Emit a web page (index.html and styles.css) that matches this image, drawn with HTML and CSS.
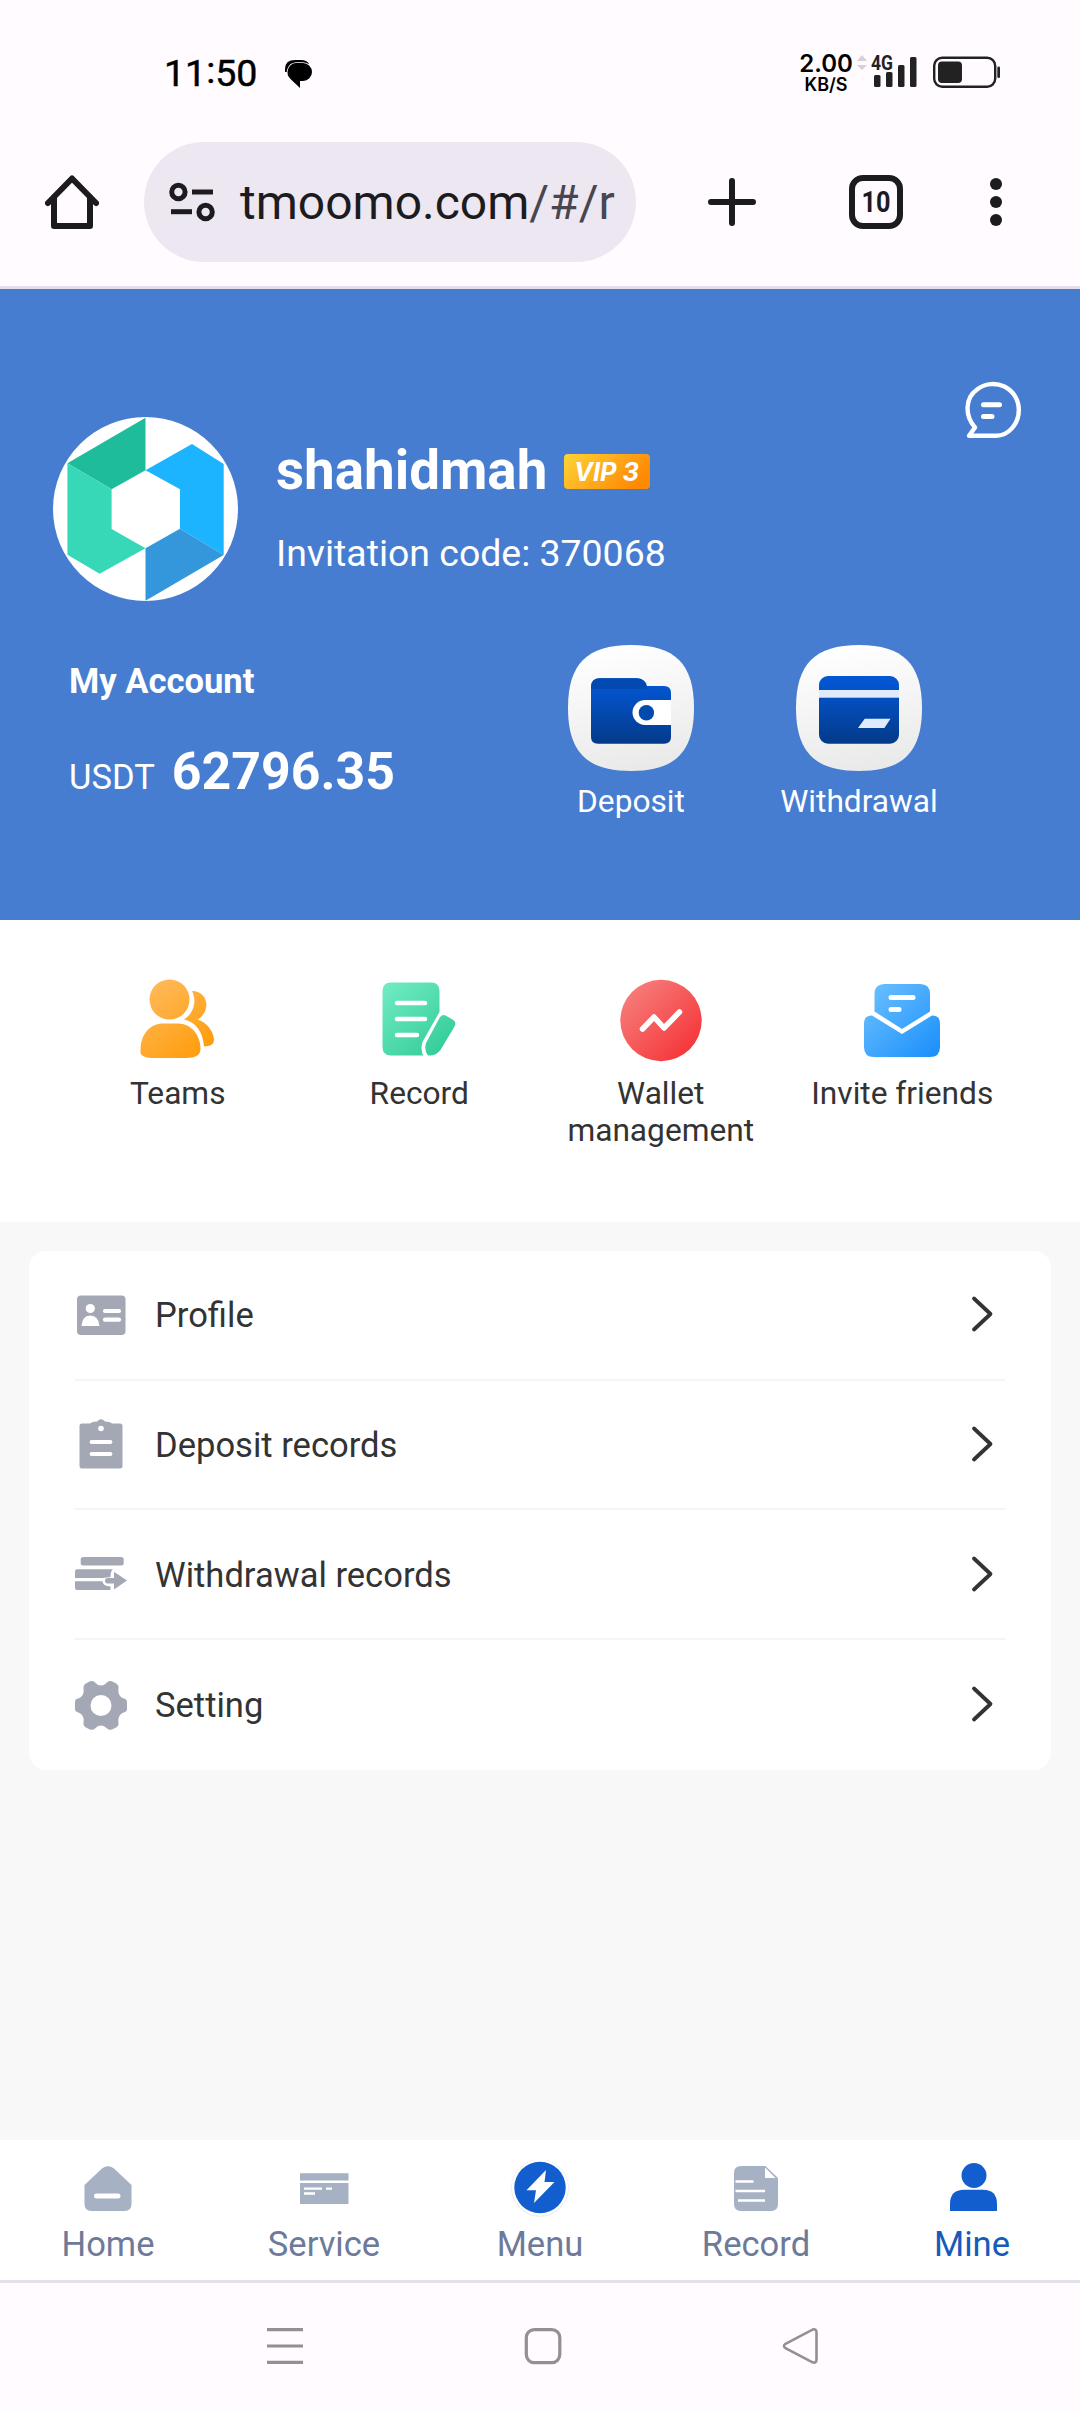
FILE: index.html
```html
<!DOCTYPE html>
<html lang="en">
<head>
    <meta charset="UTF-8">
    <meta name="viewport" content="width=device-width, initial-scale=1.0">
    <title>Mine</title>
    <link rel="stylesheet" href="styles.css">
</head>
<body>
    <!-- Status bar -->
    <div class="status-bar">
        <span class="time">11<span class="colon">:</span>50</span>
        <svg class="status-chat" width="30" height="30" viewBox="0 0 30 30">
            <path d="M1 13 V10 Q1 1 11 1 H17 Q23 1 25 5 L8 14 L2 13Z" fill="#000"/>
            <path d="M12 4 H19 A9 9 0 0 1 19 22 H16 V29 L7 20.5 A9.3 9.3 0 0 1 12 4Z" fill="#000" stroke="#fffbff" stroke-width="1.6" paint-order="stroke"/>
        </svg>
        <div class="net-speed">
            <span class="speed">2.00</span>
            <span class="unit">KB/S</span>
        </div>
        <svg class="signal" width="62" height="44" viewBox="0 -8 62 44">
            <path d="M0 7 L5 1 L10 7Z M0 11 L5 16 L10 11Z" fill="#d5d1d7"/>
            <text x="14" y="16" textLength="22" lengthAdjust="spacingAndGlyphs" class="signal-text">4G</text>
            <g fill="#222">
                <rect x="17" y="21" width="6.5" height="12" rx="1.5"/>
                <rect x="29" y="18" width="6.5" height="15" rx="1.5"/>
                <rect x="41" y="11" width="6.5" height="22" rx="1.5"/>
                <rect x="53" y="3" width="6.5" height="30" rx="1.5"/>
            </g>
        </svg>
        <svg class="battery" width="68" height="32" viewBox="0 0 68 32">
            <rect x="1.2" y="1.7" width="61" height="29" rx="8" fill="none" stroke="#222" stroke-width="2.4"/>
            <rect x="5" y="5.5" width="24" height="21.5" rx="4" fill="#222"/>
            <rect x="64.3" y="10.5" width="2.7" height="11.5" rx="1.3" fill="#222"/>
        </svg>
    </div>

    <!-- Browser toolbar -->
    <div class="browser-bar">
        <svg class="home-btn" width="54" height="56" viewBox="0 0 54 56">
            <path d="M3 29 L27 4.5 L51 29 M9 23 V52 H45 V23" fill="none" stroke="#1c1b1e" stroke-width="6" stroke-linecap="round" stroke-linejoin="round"/>
        </svg>
        <div class="url-box">
            <svg width="46" height="40" viewBox="0 0 46 40" fill="none" stroke="#1c1b1e" stroke-width="5">
                <circle cx="9.4" cy="10" r="6.7"/>
                <path d="M23 10 H44"/>
                <path d="M2 29.7 H23"/>
                <circle cx="36.6" cy="30" r="6.7"/>
            </svg>
            <span class="url">tmoomo.com<span class="url-path">/#/r</span></span>
        </div>
        <svg class="plus-btn" width="50" height="50" viewBox="0 0 50 50">
            <path d="M25 4 V46 M4 25 H46" stroke="#1c1b1e" stroke-width="6" stroke-linecap="round"/>
        </svg>
        <div class="tabs-btn">
            <svg width="54" height="54" viewBox="0 0 54 54">
                <rect x="3" y="3" width="48" height="48" rx="11" fill="none" stroke="#1c1b1e" stroke-width="6"/>
                <text x="12.5" y="37" textLength="29" lengthAdjust="spacingAndGlyphs" class="tabs-count">10</text>
            </svg>
        </div>
        <svg class="dots-btn" width="12" height="50" viewBox="0 0 12 50" fill="#1c1b1e">
            <circle cx="6" cy="7" r="6"/>
            <circle cx="6" cy="25" r="6"/>
            <circle cx="6" cy="43" r="6"/>
        </svg>
    </div>

    <!-- User header -->
    <header class="header">
        <div class="user">
            <svg class="avatar" width="185" height="184" viewBox="0 0 185 184">
                <ellipse cx="92.5" cy="92" rx="92.5" ry="92" fill="#fff"/>
                <polygon points="92.5,0.7 14.4,46.3 58.6,72.3 92.5,53.3" fill="#1fbc9c"/>
                <polygon points="14.4,46.3 58.6,72.3 58.6,112 92.5,131.3 46.6,156.7 14.4,137.7" fill="#37d8b8"/>
                <polygon points="92.5,53.3 139,27 170.7,47 170.7,138 127,111.7 127,72.3" fill="#1db4ff"/>
                <polygon points="92.5,131.3 127,111.7 170.7,138 92.5,183.7" fill="#3597db"/>
            </svg>
            <div class="user-info">
                <div class="name-row">
                    <h1>shahidmah</h1>
                    <svg class="vip" width="86" height="35" viewBox="0 0 86 35">
                        <defs>
                            <linearGradient id="vipGrad" x1="0" y1="0" x2="1" y2="0.4">
                                <stop offset="0" stop-color="#fed436"/>
                                <stop offset="1" stop-color="#ff8b05"/>
                            </linearGradient>
                        </defs>
                        <rect width="86" height="35" rx="4" fill="url(#vipGrad)"/>
                        <text x="10" y="26.5" textLength="65" lengthAdjust="spacingAndGlyphs" class="vip-text">VIP 3</text>
                    </svg>
                </div>
                <p class="invite-code">Invitation code: 370068</p>
            </div>
            <svg class="message" width="58" height="60" viewBox="0 0 58 60" fill="none" stroke="#fff" stroke-width="4.4" stroke-linecap="round" stroke-linejoin="round">
                <path d="M10 46.5 C-0.5 34.500 0 17 12 8.500 A25.800 25.800 0 0 1 53.800 29 C53.800 43 43.500 54.700 31 54.700 H4 Z"/>
                <path d="M18.500 23.700 H34.500 M18.500 35.500 H27" stroke-width="5"/>
            </svg>
        </div>

        <div class="account">
            <div class="balance">
                <h2>My Account</h2>
                <div class="amount">
                    <span class="currency">USDT</span>
                    <span class="value">62796.35</span>
                </div>
            </div>
            <div class="actions">
                <div class="action">
                    <svg width="126" height="126" viewBox="0 0 126 126">
                        <defs>
                            <linearGradient id="tileGrad" x1="0.4" y1="0" x2="0.6" y2="1">
                                <stop offset="0" stop-color="#fff"/>
                                <stop offset="1" stop-color="#e9e9e9"/>
                            </linearGradient>
                            <linearGradient id="blueGrad" x1="0" y1="0" x2="0" y2="1">
                                <stop offset="0.1" stop-color="#0356d2"/>
                                <stop offset="1" stop-color="#033a89"/>
                            </linearGradient>
                        </defs>
                        <path d="M63 0 C107 0 126 19 126 63 C126 107 107 126 63 126 C19 126 0 107 0 63 C0 19 19 0 63 0Z" fill="url(#tileGrad)"/>
                        <path d="M23 42 Q23 33.3 32 33.3 H69 Q77 33.3 79 41 H96 Q103 41 103 48 V92 Q103 98.7 96 98.7 H30 Q23 98.7 23 92Z" fill="url(#blueGrad)"/>
                        <path d="M23 44 V42 Q23 33.3 32 33.3 H69 Q77 33.3 79.3 44Z" fill="#0349b2"/>
                        <path d="M103 55 H77 A12.5 12.5 0 0 0 77 80 H103Z" fill="#fff"/>
                        <circle cx="78.4" cy="67.7" r="7.7" fill="#034aae"/>
                    </svg>
                    <span>Deposit</span>
                </div>
                <div class="action">
                    <svg width="126" height="126" viewBox="0 0 126 126">
                        <path d="M63 0 C107 0 126 19 126 63 C126 107 107 126 63 126 C19 126 0 107 0 63 C0 19 19 0 63 0Z" fill="url(#tileGrad)"/>
                        <rect x="23" y="31" width="80" height="67.7" rx="9" fill="url(#blueGrad)"/>
                        <rect x="23" y="45" width="80" height="7.7" fill="#dfeafc"/>
                        <polygon points="62,83 68.7,73.7 94.5,73.7 88.4,83" fill="#dfeafc"/>
                    </svg>
                    <span>Withdrawal</span>
                </div>
            </div>
        </div>
    </header>

    <!-- Shortcuts -->
    <section class="shortcuts">
        <div class="shortcut">
            <svg width="90" height="90" viewBox="0 0 90 90">
                <defs>
                    <linearGradient id="orangeGrad" gradientUnits="userSpaceOnUse" x1="15" y1="5" x2="75" y2="80">
                        <stop offset="0" stop-color="#ffbb5e"/>
                        <stop offset="1" stop-color="#ff9b08"/>
                    </linearGradient>
                </defs>
                <g fill="url(#orangeGrad)">
                    <circle cx="36.5" cy="24.5" r="20"/>
                    <path d="M7.5 75 C7.5 58 18 48.5 30 48.5 H45 C58 48.5 67.5 60 67.5 74 Q67.5 83 53 83 H22 Q7.5 83 7.5 77Z"/>
                    <path d="M59 16 C76 16 78 37 64.5 44.5 C74 47 81 57 81 65 Q81 71.5 71 71.5 C70 57 63 47 51 44.5 C61 38 64 26 59 16Z"/>
                </g>
            </svg>
            <span>Teams</span>
        </div>
        <div class="shortcut">
            <svg width="90" height="90" viewBox="0 0 90 90">
                <defs>
                    <linearGradient id="greenGrad" gradientUnits="userSpaceOnUse" x1="10" y1="8" x2="75" y2="80">
                        <stop offset="0" stop-color="#72ebc4"/>
                        <stop offset="1" stop-color="#2fcb95"/>
                    </linearGradient>
                </defs>
                <path d="M8.5 16 Q8.5 7.5 17 7.5 H57 Q65.5 7.5 65.5 16 V37 L49 66 Q46 72 49 80.5 H17 Q8.5 80.5 8.5 72Z" fill="url(#greenGrad)"/>
                <path d="M65.5 43 Q68 38.5 72.5 41 L78.5 44.5 Q83 47 80.5 51.5 L66.5 75 Q62 81 54 80.5 Q50 76 52 68Z" fill="url(#greenGrad)"/>
                <path d="M23 28 H51 M23 44 H51 M23 60 H43" stroke="#fff" stroke-width="4.5" stroke-linecap="round"/>
            </svg>
            <span>Record</span>
        </div>
        <div class="shortcut">
            <svg width="90" height="90" viewBox="0 0 90 90">
                <defs>
                    <linearGradient id="redGrad" x1="0.1" y1="0.1" x2="0.9" y2="0.9">
                        <stop offset="0" stop-color="#f67e7c"/>
                        <stop offset="1" stop-color="#f63337"/>
                    </linearGradient>
                </defs>
                <circle cx="45" cy="45.5" r="40.7" fill="url(#redGrad)"/>
                <path d="M26.5 54 L38 42 L48 53 L63.5 37" fill="none" stroke="#fff" stroke-width="5.5" stroke-linecap="round" stroke-linejoin="round"/>
            </svg>
            <span>Wallet management</span>
        </div>
        <div class="shortcut">
            <svg width="90" height="90" viewBox="0 0 90 90">
                <defs>
                    <linearGradient id="skyGrad" gradientUnits="userSpaceOnUse" x1="12" y1="10" x2="80" y2="80">
                        <stop offset="0" stop-color="#6cc0ff"/>
                        <stop offset="1" stop-color="#1b90fb"/>
                    </linearGradient>
                </defs>
                <path d="M17.5 19 Q17.5 9 27.5 9 H63 Q73 9 73 19 V36.5 L45 54 L17.5 36.5Z" fill="url(#skyGrad)"/>
                <path d="M7 49 Q7 40 15 40.5 L45 59 L75 40.5 Q83 40 83 49 V72 Q83 82 73 82 H17 Q7 82 7 72Z" fill="url(#skyGrad)"/>
                <path d="M34 22.5 H56 M34 34.5 H42" stroke="#fff" stroke-width="5" stroke-linecap="round"/>
            </svg>
            <span>Invite friends</span>
        </div>
    </section>

    <!-- Settings list -->
    <main class="content">
        <div class="list">
            <div class="list-item">
                <svg class="item-icon" viewBox="0 0 52 52">
                    <rect x="2" y="6.5" width="48.5" height="39.5" rx="4" fill="#a4a8b5"/>
                    <circle cx="15.3" cy="19.5" r="4.6" fill="#fff"/>
                    <path d="M6.500 37 Q7 26.500 15.300 26.500 T24.500 37Z" fill="#fff"/>
                    <path d="M30 22 H44 M30 30.700 H44" stroke="#fff" stroke-width="4.2" stroke-linecap="round"/>
                </svg>
                <span>Profile</span>
                <svg class="arrow" viewBox="0 0 24 40"><path d="M3 3.500 L19.500 19 L3 34.500"/></svg>
            </div>
            <div class="list-item">
                <svg class="item-icon" viewBox="0 0 52 52">
                    <path d="M4.5 7 Q4.5 4.5 7 4.5 H15 Q17 2.5 22 2.5 Q26 -2 30 2.5 Q35 2.5 37 4.5 H45 Q47.5 4.5 47.5 7 V47 Q47.5 49.5 45 49.5 H7 Q4.5 49.5 4.5 47Z" fill="#a4a8b5"/>
                    <circle cx="26" cy="9.5" r="2.8" fill="#fff"/>
                    <path d="M16.5 23 H35.5 M16.5 35 H35.5" stroke="#fff" stroke-width="3.8" stroke-linecap="round"/>
                </svg>
                <span>Deposit records</span>
                <svg class="arrow" viewBox="0 0 24 40"><path d="M3 3.500 L19.500 19 L3 34.500"/></svg>
            </div>
            <div class="list-item">
                <svg class="item-icon" viewBox="0 0 52 52">
                    <g fill="#a4a8b5">
                        <rect x="5.7" y="8" width="43" height="8.5" rx="2.5"/>
                        <path d="M2 20.3 H38 Q35.5 22 35.5 28 Q28 29 27.5 29 H0 V22.5 Q0 20.3 2 20.3Z"/>
                        <path d="M0 32.2 H27.5 Q27.5 37 35.5 37.5 V41 H2 Q0 41 0 39Z"/>
                        <path d="M33 29 H39 V22.7 L52 31.5 L39 40.5 V34.5 H33 Q30 34.5 30 31.7 T33 29Z"/>
                    </g>
                </svg>
                <span>Withdrawal records</span>
                <svg class="arrow" viewBox="0 0 24 40"><path d="M3 3.500 L19.500 19 L3 34.500"/></svg>
            </div>
            <div class="list-item">
                <svg class="item-icon" viewBox="0 0 52 52">
                    <path fill="#a4a8b5" fill-rule="evenodd" d="M26 6.5 Q29.5 6.5 32 3.5 Q34 1.5 37 2.3 L42 5 Q44 6.5 43.5 9.5 Q42.5 15 46 18 Q48 19.5 50 19.7 Q52 20.5 52 23 V30 Q52 32.5 50 33 Q48 33.3 46 35 Q42.5 38 43.5 43.5 Q44 46.5 42 48 L37 50.5 Q34 51.5 32 49.5 Q29.5 46.5 26 46.5 T20 49.5 Q18 51.5 15 50.5 L10 48 Q8 46.5 8.5 43.5 Q9.5 38 6 35 Q4 33.3 2 33 Q0 32.5 0 30 V23 Q0 20.5 2 19.7 Q4 19.5 6 18 Q9.5 15 8.5 9.5 Q8 6.5 10 5 L15 2.3 Q18 1.5 20 3.5 Q22.5 6.5 26 6.5Z M26 16 A10.5 10.5 0 1 0 26 37 A10.5 10.5 0 1 0 26 16Z"/>
                </svg>
                <span>Setting</span>
                <svg class="arrow" viewBox="0 0 24 40"><path d="M3 3.500 L19.500 19 L3 34.500"/></svg>
            </div>
        </div>
    </main>

    <!-- Tab bar -->
    <nav class="tab-bar">
        <div class="tab">
            <svg width="60" height="60" viewBox="0 0 60 60">
                <path d="M24 8.5 Q30 4 36 8.5 L53.5 25 V44 Q53.5 51 46.500 51 H13.500 Q6.500 51 6.500 44 V25Z" fill="#a6b1c3"/>
                <path d="M18.500 36 H40" stroke="#fff" stroke-width="5" stroke-linecap="round"/>
            </svg>
            <span>Home</span>
        </div>
        <div class="tab">
            <svg width="60" height="60" viewBox="0 0 60 60">
                <path d="M6 13.3 H54.5 V20.5 H6Z M6 23 H54.5 V44 H6Z" fill="#a6b1c3"/>
                <path d="M10 28.700 H28 M32 28.700 H38 M10 33.500 H21" stroke="#fff" stroke-width="2.3"/>
            </svg>
            <span>Service</span>
        </div>
        <div class="tab">
            <svg width="60" height="60" viewBox="0 0 60 60">
                <circle cx="30" cy="28" r="29" fill="#f0f0f2"/>
                <circle cx="30" cy="27.5" r="28" fill="#fff"/>
                <circle cx="30" cy="27.5" r="25.7" fill="#125ecf"/>
                <path d="M36 10 L16.5 30.3 H26 L24 43 L44.5 22 H34.5Z" fill="#fff"/>
            </svg>
            <span>Menu</span>
        </div>
        <div class="tab">
            <svg width="60" height="60" viewBox="0 0 60 60">
                <path d="M8 13 Q8 6 15 6 H39.5 L52 18 V44 Q52 51 45 51 H15 Q8 51 8 44Z" fill="#a6b1c3"/>
                <path d="M39 7.5 V18 H49.5Z" fill="#fff"/>
                <path d="M9.5 21.5 H27.5 M9.5 31 H39 M12 40.5 H39" stroke="#fff" stroke-width="2.5"/>
            </svg>
            <span>Record</span>
        </div>
        <div class="tab active">
            <svg width="60" height="60" viewBox="0 0 60 60">
                <circle cx="32" cy="15.5" r="12.5" fill="#125ecf"/>
                <path d="M8 51 V44 Q8 29.7 22 29.7 H41 Q55 29.7 55 44 V51Z" fill="#125ecf"/>
            </svg>
            <span>Mine</span>
        </div>
    </nav>

    <!-- System navigation -->
    <div class="system-nav">
        <svg width="36" height="38" viewBox="0 0 36 38">
            <path d="M0 2.7 H36 M0 19 H36 M0 35.3 H36"/>
        </svg>
        <svg width="38" height="38" viewBox="0 0 38 38">
            <rect x="2.3" y="2.6" width="33.5" height="33" rx="8"/>
        </svg>
        <svg width="38" height="38" viewBox="0 0 38 38">
            <path d="M3.5 16.8 L30.5 2.6 Q34.5 1.5 34.5 5.5 V32.5 Q34.5 36.5 30.5 35.3 L3.5 21.2 Q0.5 19 3.5 16.8Z" stroke-width="2.6"/>
        </svg>
    </div>
</body>
</html>
```
FILE: styles.css
```css
:root {
    --chrome-bg: #fffbff;
    --header-bg: #467dd0;
    --page-bg: #f8f8f8;
    --text-color: #333333;
    --tab-color: #6e7a99;
    --tab-active: #155bba;
    --line-color: #f5f5f5;
}

* {
    box-sizing: border-box;
    margin: 0;
    padding: 0;
}

body {
    width: 1080px;
    height: 2412px;
    display: flex;
    flex-direction: column;
    background-color: var(--page-bg);
    color: var(--text-color);
    font-family: 'Roboto', sans-serif;
}

svg {
    display: block;
    flex-shrink: 0;
}

/* Status bar */
.status-bar {
    height: 142px;
    padding: 46px 79px 0 164px;
    display: flex;
    align-items: flex-start;
    background-color: var(--chrome-bg);
    color: #000;
}

.time {
    width: 93px;
    font-size: 37.5px;
    line-height: 40px;
    margin-top: 7px;
    -webkit-text-stroke: 0.5px #000;
}

.colon {
    position: relative;
    top: -3px;
}

.status-chat {
    margin: 13px 0 0 27px;
}

.net-speed {
    margin-left: auto;
    margin-top: 4px;
    display: flex;
    flex-direction: column;
    align-items: center;
    font-family: 'Inter', sans-serif;
    width: 54px;
}

.speed {
    font-size: 24px;
    line-height: 28px;
    font-weight: 600;
}

.unit {
    font-size: 18px;
    line-height: 14px;
    font-weight: 600;
}

.signal {
    margin-left: 4px;
}

.signal-text {
    font-size: 20px;
    font-weight: 700;
    fill: #222;
}

.battery {
    margin: 10px 0 0 14px;
}

/* Browser toolbar */
.browser-bar {
    height: 147px;
    padding: 0 78px 24px 45px;
    display: flex;
    align-items: center;
    background-color: var(--chrome-bg);
    border-bottom: 3px solid #e1deed;
}

.url-box {
    width: 492px;
    height: 120px;
    margin-left: 45px;
    padding: 0 0 0 25px;
    border-radius: 60px;
    background-color: #ece7f1;
    display: flex;
    align-items: center;
}

.url {
    margin-left: 25px;
    font-size: 48px;
    color: #1c1b1e;
    white-space: nowrap;
}

.url-path {
    color: #49464f;
}

.plus-btn {
    margin-left: 71px;
}

.tabs-btn {
    margin-left: 92px;
}

.tabs-count {
    font-size: 30px;
    font-weight: 700;
    fill: #1c1b1e;
}

.dots-btn {
    margin-left: 87px;
}

/* User header */
.header {
    height: 631px;
    padding: 92px 57px 0 53px;
    background-color: var(--header-bg);
    color: #fff;
}

.user {
    display: flex;
    align-items: flex-start;
}

.avatar {
    margin-top: 36px;
}

.user-info {
    margin: 57px 0 0 38px;
}

.name-row {
    display: flex;
    align-items: center;
}

.name-row h1 {
    font-size: 54.72px;
    line-height: 64px;
    font-weight: 700;
}

.vip {
    margin: 3px 0 0 17px;
}

.vip-text {
    font-family: 'Inter', sans-serif;
    font-size: 25px;
    font-style: italic;
    font-weight: 700;
    fill: #fff;
}

.invite-code {
    margin-top: 30px;
    font-size: 37.44px;
    line-height: 42px;
}

.message {
    margin-left: auto;
}

.account {
    margin-top: 44px;
    padding: 0 50px 0 16px;
    display: flex;
    justify-content: space-between;
}

.balance {
    padding-top: 16px;
}

.balance h2 {
    font-size: 34.56px;
    line-height: 40px;
    font-weight: 700;
}

.amount {
    margin-top: 40px;
    display: flex;
    align-items: baseline;
    gap: 17px;
}

.currency {
    font-size: 34.56px;
}

.value {
    font-size: 51.84px;
    line-height: 61px;
    font-weight: 700;
}

.actions {
    display: flex;
}

.action {
    width: 228px;
    display: flex;
    flex-direction: column;
    align-items: center;
    gap: 12px;
    font-size: 31.68px;
    line-height: 37px;
}

/* Shortcuts */
.shortcuts {
    height: 302px;
    padding: 55px 57px 0;
    display: grid;
    grid-template-columns: repeat(4, 1fr);
    background-color: #fff;
}

.shortcut {
    display: flex;
    flex-direction: column;
    align-items: center;
    gap: 10px;
    font-size: 31.68px;
    line-height: 37px;
    text-align: center;
}

/* Settings list */
.content {
    flex: 1;
    padding: 29px 29px 0;
}

.list {
    padding: 0 46px;
    border-radius: 17px;
    background-color: #fff;
}

.list-item {
    height: 129.7px;
    padding-top: 1px;
    display: flex;
    align-items: center;
    border-bottom: 2px solid var(--line-color);
    font-size: 34.56px;
}

.list-item:last-child {
    border-bottom: none;
}

.item-icon {
    width: 52px;
    height: 52px;
    margin-right: 28px;
}

.arrow {
    width: 24px;
    height: 40px;
    margin-left: auto;
    margin-right: 10px;
    fill: none;
    stroke: #333;
    stroke-width: 3.8;
    stroke-linecap: round;
    stroke-linejoin: round;
}

/* Tab bar */
.tab-bar {
    height: 143px;
    padding-top: 20px;
    display: grid;
    grid-template-columns: repeat(5, 1fr);
    background-color: #fff;
    border-bottom: 3px solid #e5e0eb;
}

.tab {
    display: flex;
    flex-direction: column;
    align-items: center;
    gap: 4px;
    font-size: 34.56px;
    line-height: 41px;
    color: var(--tab-color);
}

.tab.active {
    color: var(--tab-active);
}

/* System navigation */
.system-nav {
    height: 129px;
    padding: 44px 260px 0 267px;
    display: flex;
    justify-content: space-between;
    background-color: var(--chrome-bg);
}

.system-nav svg {
    fill: none;
    stroke: #929094;
    stroke-width: 3.2;
}
```
